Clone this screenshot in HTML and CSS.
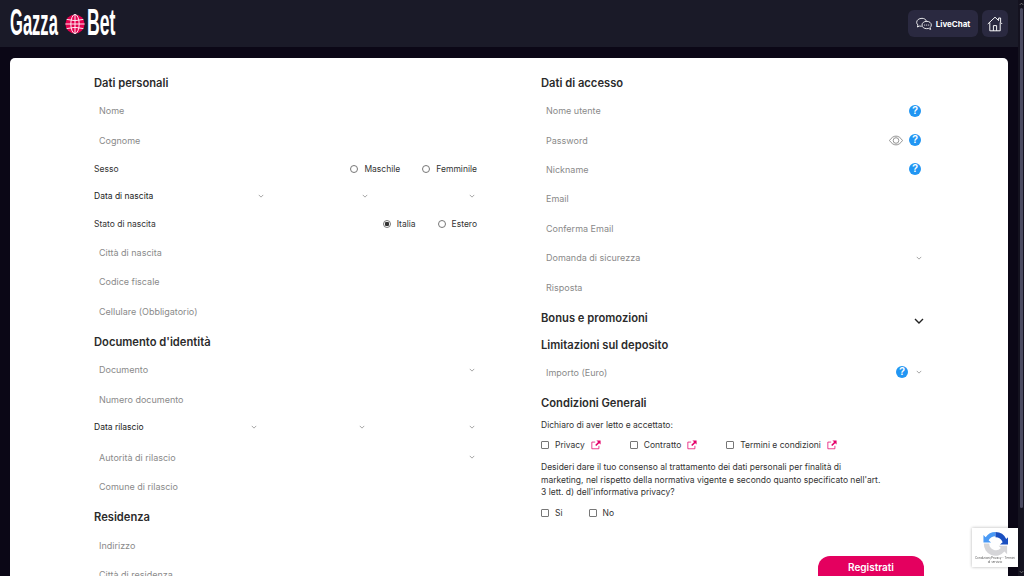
FILE: index.html
```html
<!DOCTYPE html>
<html lang="it">
<head>
    <meta charset="UTF-8">
    <meta name="viewport" content="width=device-width, initial-scale=1.0">
    <title>GazzaBet - Registrazione</title>
    <link rel="stylesheet" href="styles.css">
</head>
<body>
    <div class="page">
        <header class="topbar">
            <a class="logo">
                <span class="logo-slot gazza"><span class="logo-word">Gazza</span></span>
                <svg class="logo-globe" viewBox="0 0 24 24">
                    <circle cx="12" cy="12" r="11.5" fill="#e4004f"/>
                    <g fill="none" stroke="#fff" stroke-width="1.1">
                        <ellipse cx="12" cy="12" rx="5" ry="11.5"/>
                        <path d="M12 .5v23M2 6.5q10 3 20 0M.5 12h23M2 17.500q10-3 20 0"/>
                    </g>
                </svg>
                <span class="logo-slot bet"><span class="logo-word">Bet</span></span>
            </a>
            <div class="topbar-actions">
                <button class="top-btn chat-btn">
                    <svg class="chat-icon" viewBox="0 0 24 20">
                        <g fill="none" stroke="#fff" stroke-width="1.3">
                            <path d="M16 6.5C15 3 12 1.5 9 1.5 4.5 1.5 1 4 1 7.5c0 1.700.8 3 2 4l-1 3 3.500-1.500c1 .3 2 .5 3 .5"/>
                            <path d="M16 6c4 0 7 2.300 7 5.500 0 1.500-.7 2.800-1.800 3.700l.8 3-3.300-1.500c-.9.2-1.700.3-2.700.3-4 0-7-2.300-7-5.500S12 6 16 6z"/>
                        </g>
                        <g fill="#fff"><circle cx="13" cy="11.500" r=".9"/><circle cx="16" cy="11.500" r=".9"/><circle cx="19" cy="11.500" r=".9"/></g>
                    </svg>
                    LiveChat
                </button>
                <button class="top-btn home-btn">
                    <svg class="home-icon" viewBox="0 0 20 20" fill="none" stroke="#fff" stroke-width="1.200" stroke-linejoin="round">
                        <path d="M1 10 10 1.500l4.500 4.200V2.500h2.500v5.500L19 10"/>
                        <path d="M3.500 8v10.500h13V8"/>
                        <path d="M8 18.500v-6.500h4v6.500"/>
                    </svg>
                </button>
            </div>
        </header>

        <main class="card">
            <section class="col">
                <h2 class="title">Dati personali</h2>
                <div class="field">Nome</div>
                <div class="field">Cognome</div>
                <div class="inline-row">
                    <span class="label">Sesso</span>
                    <div class="options">
                        <label class="opt"><i class="radio"></i>Maschile</label>
                        <label class="opt"><i class="radio"></i>Femminile</label>
                    </div>
                </div>
                <div class="inline-row date-row birth">
                    <span class="label dark select-part">Data di nascita <svg class="chev" viewBox="0 0 8 5"><path d="M1 1l3 3 3-3"/></svg></span>
                    <span class="select-part"><svg class="chev" viewBox="0 0 8 5"><path d="M1 1l3 3 3-3"/></svg></span>
                    <span class="select-part"><svg class="chev" viewBox="0 0 8 5"><path d="M1 1l3 3 3-3"/></svg></span>
                </div>
                <div class="inline-row">
                    <span class="label">Stato di nascita</span>
                    <div class="options">
                        <label class="opt"><i class="radio on"></i>Italia</label>
                        <label class="opt"><i class="radio"></i>Estero</label>
                    </div>
                </div>
                <div class="field">Città di nascita</div>
                <div class="field">Codice fiscale</div>
                <div class="field">Cellulare (Obbligatorio)</div>

                <h2 class="title">Documento d'identità</h2>
                <div class="field">Documento <svg class="chev" viewBox="0 0 8 5"><path d="M1 1l3 3 3-3"/></svg></div>
                <div class="field">Numero documento</div>
                <div class="inline-row date-row release">
                    <span class="label dark select-part">Data rilascio <svg class="chev" viewBox="0 0 8 5"><path d="M1 1l3 3 3-3"/></svg></span>
                    <span class="select-part"><svg class="chev" viewBox="0 0 8 5"><path d="M1 1l3 3 3-3"/></svg></span>
                    <span class="select-part"><svg class="chev" viewBox="0 0 8 5"><path d="M1 1l3 3 3-3"/></svg></span>
                </div>
                <div class="field">Autorità di rilascio <svg class="chev" viewBox="0 0 8 5"><path d="M1 1l3 3 3-3"/></svg></div>
                <div class="field">Comune di rilascio</div>

                <h2 class="title residence">Residenza</h2>
                <div class="field">Indirizzo</div>
                <div class="field">Città di residenza</div>
            </section>

            <section class="col">
                <h2 class="title">Dati di accesso</h2>
                <div class="field">Nome utente <i class="help">?</i></div>
                <div class="field">Password
                    <svg class="eye" viewBox="0 0 16 12" fill="none" stroke="#777" stroke-width=".9">
                        <path d="M.6 6C3 2.400 5.400 1 8 1s5 1.400 7.400 5C13 9.600 10.600 11 8 11S3 9.600.6 6z"/>
                        <circle cx="8" cy="6" r="3.200"/>
                    </svg>
                    <i class="help">?</i>
                </div>
                <div class="field">Nickname <i class="help">?</i></div>
                <div class="field">Email</div>
                <div class="field">Conferma Email</div>
                <div class="field">Domanda di sicurezza <svg class="chev" viewBox="0 0 8 5"><path d="M1 1l3 3 3-3"/></svg></div>
                <div class="field">Risposta</div>

                <h2 class="title bonus">Bonus e promozioni <svg class="chev-big" viewBox="0 0 10 6"><path d="M1 1l4 4 4-4"/></svg></h2>
                <h2 class="title limit">Limitazioni sul deposito</h2>
                <div class="field">Importo (Euro) <i class="help">?</i> <svg class="chev after-help" viewBox="0 0 8 5"><path d="M1 1l3 3 3-3"/></svg></div>

                <h2 class="title">Condizioni Generali</h2>
                <p class="text declare">Dichiaro di aver letto e accettato:</p>
                <div class="checks terms">
                    <label class="opt"><i class="box"></i>Privacy <svg class="ext" viewBox="0 0 12 12"><use href="#ext-icon"/></svg></label>
                    <label class="opt"><i class="box"></i>Contratto <svg class="ext" viewBox="0 0 12 12"><use href="#ext-icon"/></svg></label>
                    <label class="opt"><i class="box"></i>Termini e condizioni <svg class="ext" viewBox="0 0 12 12"><use href="#ext-icon"/></svg></label>
                </div>
                <p class="text consent">Desideri dare il tuo consenso al trattamento dei dati personali per finalità di marketing, nel rispetto della normativa vigente e secondo quanto specificato nell'art. 3 lett. d) dell'informativa privacy?</p>
                <div class="checks yesno">
                    <label class="opt"><i class="box"></i>Si</label>
                    <label class="opt"><i class="box"></i>No</label>
                </div>
                <div class="submit-row">
                    <button class="submit">Registrati</button>
                </div>
            </section>
        </main>
    </div>

    <div class="scrollbar">
        <svg class="scroll-arrow" viewBox="0 0 6 4"><path d="M1 3l2-2 2 2"/></svg>
        <span class="thumb"></span>
        <svg class="scroll-arrow" viewBox="0 0 6 4"><path d="M1 1l2 2 2-2"/></svg>
    </div>

    <div class="recaptcha">
        <svg class="recaptcha-logo" viewBox="0 0 28 28">
            <path d="M14 1a13 13 0 0 0-11 6L.5 4.500V13h8.500L6.300 10.300A9 9 0 0 1 14 6z" fill="#4a9af5"/>
            <path d="M14 1a13 13 0 0 1 12 8l2-2v8h-9l3-2.500A9 9 0 0 0 14 7z" fill="#1a4fc0"/>
            <path d="M1 14h6a7.500 7.500 0 0 0 13 5l-2.500-2.500H27V26l-3-3A13 13 0 0 1 1 14z" fill="#d5d5d8"/>
        </svg>
        <span class="recaptcha-text">Condizioni/Privacy - Termini<br>di servizio</span>
    </div>

    <svg class="sprite">
        <symbol id="ext-icon" viewBox="0 0 12 12">
            <path d="M9.500 7v3.500h-8.500V2.500H5" fill="none" stroke="#e4006a" stroke-width=".9"/>
            <path d="M6.500 0.500h5V5.500L9.800 3.800 6.300 7.300 5 6 8.500 2.500z" fill="#e4006a"/>
        </symbol>
    </svg>
</body>
</html>
```

FILE: styles.css
```css
* { box-sizing: border-box; }
html, body {
    margin: 0;
    height: 576px;
    overflow: hidden;
}
body {
    display: flex;
    background-color: #0b0716;
    font-family: Inter, "Noto Sans", sans-serif;
    color: #333;
}
.page {
    flex: 1;
    min-width: 0;
}
.sprite { display: none; }

/* barra in alto */
.topbar {
    height: 47px;
    padding: 8px 10px 10px 10px;
    background-color: #1a1a28;
    display: flex;
    justify-content: space-between;
    align-items: center;
}
.logo {
    display: flex;
    align-items: center;
    gap: 7px;
}
.logo-slot {
    display: block;
    height: 30px;
}
.logo-slot.gazza { width: 48px; }
.logo-slot.bet { width: 28px; margin-left: -6px; padding-left: 1px; }
.logo-word {
    display: inline-block;
    font-family: "Liberation Sans", sans-serif;
    font-weight: 700;
    font-size: 36px;
    line-height: 30px;
    color: #fff;
    white-space: nowrap;
    transform-origin: left center;
}
.gazza .logo-word { transform: scaleX(0.46); }
.bet .logo-word { transform: scaleX(0.49); }
.logo-globe {
    width: 20px;
    height: 20px;
    position: relative;
    top: 1px;
}
.topbar-actions {
    display: flex;
    gap: 4px;
    position: relative;
    top: 1px;
}
.top-btn {
    height: 27px;
    border: none;
    border-radius: 6px;
    background-color: #2a2940;
    color: #fff;
    font-family: inherit;
    font-size: 8px;
    font-weight: 700;
    display: flex;
    align-items: center;
    justify-content: center;
    padding: 0;
}
.chat-btn {
    width: 70px;
    gap: 4px;
}
.home-btn { width: 26px; }
.chat-icon { width: 16px; height: 14px; }
.home-icon { width: 16px; height: 16px; }

/* scheda del modulo */
.card {
    margin: 11px 10px 0 10px;
    height: 560px;
    padding: 12px 83px 0 84px;
    background-color: #fff;
    border-radius: 5px;
    display: grid;
    grid-template-columns: 383px 383px;
    column-gap: 64px;
    overflow: hidden;
}
.col { min-width: 0; }
.title {
    margin: 3px 0 0;
    height: 26px;
    font-size: 11.200px;
    font-weight: 600;
    line-height: 26px;
    color: #2b2b2b;
}
.col > .title:first-child { margin-top: 0; }
.title.bonus {
    display: flex;
    justify-content: space-between;
    align-items: center;
}
.title.limit { margin-top: 1px; }
.title.residence { margin-top: 3px; }
.field {
    height: 29.4px;
    padding: 0 0 0 5px;
    display: flex;
    align-items: center;
    font-size: 9px;
    color: #8a8a8a;
}
.inline-row {
    height: 27.670px;
    display: flex;
    align-items: center;
    justify-content: space-between;
    font-size: 8.500px;
}
.label { color: #333; }
.label.dark { color: #222; }
.options {
    display: flex;
    gap: 22px;
}
.opt {
    display: flex;
    align-items: center;
    gap: 6px;
    font-size: 8.500px;
    color: #333;
}
.radio {
    width: 8px;
    height: 8px;
    border: 1px solid #777;
    border-radius: 50%;
    display: block;
}
.radio.on {
    background: radial-gradient(circle, #333 0 2px, #fff 2.500px);
}
.box {
    width: 8px;
    height: 8px;
    border: 1px solid #777;
    border-radius: 1px;
    display: block;
}

/* righe con tre select per la data */
.date-row {
    display: grid;
    justify-content: stretch;
}
.date-row.birth { grid-template-columns: 172px 104px 107px; }
.date-row.release {
    grid-template-columns: 165px 108px 110px;
    height: 27px;
    margin-bottom: 2px;
}
.select-part {
    display: flex;
    align-items: center;
    justify-content: space-between;
}

.chev {
    width: 6px;
    height: 4px;
    margin-left: auto;
    flex: none;
    margin-right: 2px;
    fill: none;
    stroke: #888;
    stroke-width: 1;
}
.after-help { margin-left: 5px; }
.chev-big {
    width: 10px;
    height: 6px;
    margin-right: 0;
    fill: none;
    stroke: #222;
    stroke-width: 1.400;
    position: relative;
    top: 3px;
}
.help {
    margin-left: auto;
    margin-right: 3px;
    width: 12px;
    height: 12px;
    flex: none;
    border-radius: 50%;
    background-color: #2196f3;
    color: #fff;
    font-family: "Liberation Sans", sans-serif;
    font-size: 10px;
    font-weight: 700;
    font-style: normal;
    line-height: 12px;
    text-align: center;
}
.eye {
    margin-left: auto;
    width: 14px;
    height: 11px;
    flex: none;
}
.eye + .help { margin-left: 6px; }
.help + .after-help { margin-left: 5px; }

.text {
    margin: 0;
    font-size: 8.500px;
    line-height: 12.500px;
    color: #333;
}
.declare { padding-top: 3px; height: 18px; }
.checks {
    display: flex;
    align-items: center;
    height: 22px;
}
.terms { gap: 29px; }
.ext {
    width: 10px;
    height: 10px;
}
.consent {
    margin-top: 5px;
    width: 341px;
}
.yesno { margin-top: 3px; gap: 26px; }
.submit-row {
    margin-top: 32px;
    display: flex;
    justify-content: flex-end;
}
.submit {
    width: 106px;
    height: 23px;
    border: none;
    border-radius: 12px 12px 0 0 / 12px 12px 0 0;
    background-color: #e4005f;
    color: #fff;
    font-family: inherit;
    font-size: 10px;
    font-weight: 600;
    padding: 0;
}

/* scrollbar e badge */
.scrollbar {
    width: 6px;
    background-color: #14121f;
    flex: none;
    display: flex;
    flex-direction: column;
    align-items: center;
    justify-content: space-between;
    padding: 2px 0;
}
.scroll-arrow {
    width: 5px;
    height: 4px;
    fill: none;
    stroke: #888;
    stroke-width: 1;
}
.thumb {
    display: block;
    flex: none;
    width: 3px;
    height: 500px;
    margin: 2px 0 auto;
    background-color: #4a4a60;
    border-radius: 2px;
}
.recaptcha {
    position: fixed;
    left: 972px;
    top: 528px;
    width: 46px;
    height: 39px;
    background-color: #fff;
    box-shadow: 0 0 3px rgba(0, 0, 0, 0.3);
    display: flex;
    flex-direction: column;
    align-items: center;
}
.recaptcha-logo {
    width: 25px;
    height: 25px;
    margin-top: 3px;
}
.recaptcha-text {
    font-size: 3px;
    line-height: 4px;
    text-align: center;
    color: #555;
}
```
